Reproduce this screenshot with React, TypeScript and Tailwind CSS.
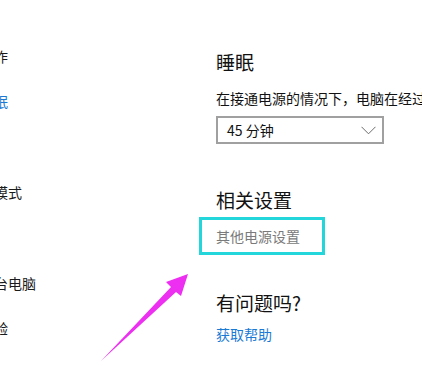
import React from "react";

const navItems = [
  { label: "通知和操作", active: false },
  { label: "电源和睡眠", active: true },
  { label: "存储", active: false },
  { label: "平板电脑模式", active: false },
  { label: "多任务", active: false },
  { label: "投影到这台电脑", active: false },
  { label: "共享的体验", active: false },
];

const font = {
  fontFamily: '"Noto Sans CJK SC", "Noto Sans", sans-serif',
};

function Chevron() {
  return (
    <svg width="15" height="9" viewBox="0 0 15 9" fill="none">
      <polyline points="0.5,0.8 7.5,7.8 14.5,0.8" stroke="#6b6b6b" strokeWidth="1" />
    </svg>
  );
}

export default function App() {
  return (
    <div
      className="relative flex w-[422px] h-[377px] overflow-hidden bg-white"
      style={font}
    >
      {/* left nav, cut off by the window edge */}
      <div className="-ml-[62px] w-[278px] shrink-0 pt-[46px] flex flex-col">
        {navItems.map((item, index) => (
          <div
            key={index}
            className={
              "h-[45.4px] whitespace-nowrap text-[14px] leading-[20px] " +
              (item.active ? "text-[#1a7ad4]" : "text-[#1a1a1a]")
            }
          >
            {item.label}
          </div>
        ))}
      </div>

      {/* main settings panel */}
      <div className="flex flex-col pt-[49px] min-w-0">
        <h2 className="text-[19px] leading-[26px] text-[#111]">睡眠</h2>
        <p className="mt-[13px] whitespace-nowrap text-[14px] leading-[20px] text-[#111]">
          在接通电源的情况下，电脑在经过
        </p>
        <div className="mt-[8px] flex h-[28px] w-[168px] items-center justify-between border-2 border-[#a0a0a0] pl-[9px] pr-[6px]">
          <span className="text-[14px] leading-[20px] text-[#111]">45 分钟</span>
          <Chevron />
        </div>

        <h2 className="mt-[43px] text-[19px] leading-[26px] text-[#111]">相关设置</h2>
        <div className="mt-[4px] -ml-[17px] flex h-[38px] w-[126px] items-center border-[3px] border-[#22d6dc] pl-[14px]">
          <span className="whitespace-nowrap text-[14px] leading-[20px] text-[#7a7a7a]">
            其他电源设置
          </span>
        </div>

        <h2 className="mt-[35px] text-[19px] leading-[26px] text-[#111]">有问题吗?</h2>
        <a className="mt-[8px] text-[14px] leading-[20px] text-[#1a7ad4]">获取帮助</a>
      </div>

      {/* annotation arrow drawn over the page */}
      <svg
        className="absolute left-0 top-0"
        width="422"
        height="377"
        viewBox="0 0 422 377"
      >
        <polygon
          points="101,361 171,287 166,282 188,274 181,296 176,292"
          fill="#ec2ff0"
        />
      </svg>
    </div>
  );
}
